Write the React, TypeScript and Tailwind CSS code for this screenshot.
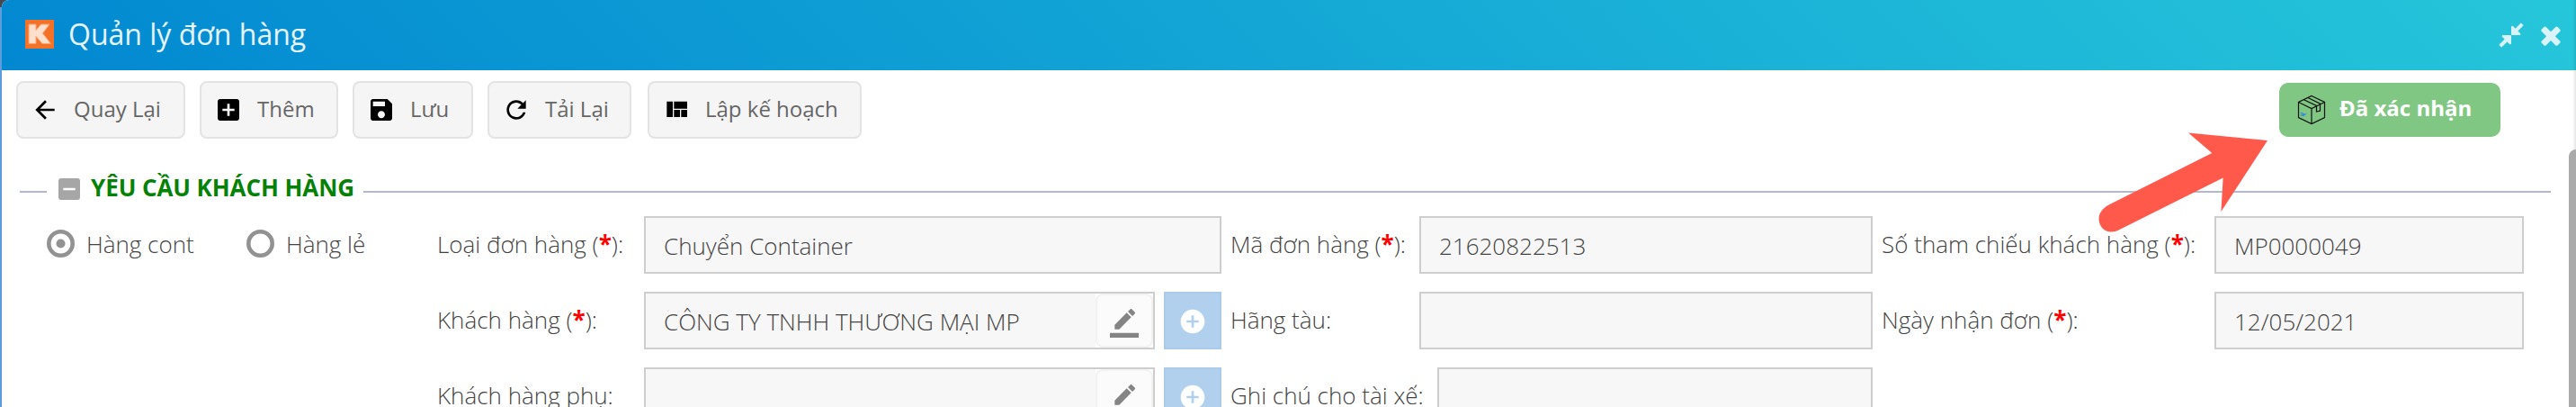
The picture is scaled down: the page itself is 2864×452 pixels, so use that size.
import type { ReactNode } from "react";

const icons = {
  back: "M20 11H7.83l5.59-5.59L12 4l-8 8 8 8 1.41-1.41L7.83 13H20v-2z",
  add: "M19 3H5c-1.11 0-2 .9-2 2v14c0 1.1.89 2 2 2h14c1.1 0 2-.9 2-2V5c0-1.1-.9-2-2-2zm-2 10h-4v4h-2v-4H7v-2h4V7h2v4h4v2z",
  save: "M17 3H5c-1.11 0-2 .9-2 2v14c0 1.1.89 2 2 2h14c1.1 0 2-.9 2-2V7l-4-4zm-5 16c-1.66 0-3-1.34-3-3s1.34-3 3-3 3 1.34 3 3-1.34 3-3 3zm3-10H5V5h10v4z",
  refresh:
    "M17.65 6.35C16.2 4.9 14.21 4 12 4c-4.42 0-7.99 3.58-7.99 8s3.57 8 7.99 8c3.73 0 6.84-2.55 7.73-6h-2.08c-.82 2.33-3.04 4-5.65 4-3.31 0-6-2.69-6-6s2.69-6 6-6c1.66 0 3.14.69 4.22 1.78L13 11h7V4l-2.35 2.35z",
  quilt: "M10 18h5v-6h-5v6zm-6 0h5V5H4v13zm12 0h5v-6h-5v6zM10 5v6h11V5H10z",
  edit: "M17.75 7L14 3.25l-10 10V17h3.75l10-10zm2.96-2.96c.39-.39.39-1.02 0-1.41L18.37.29c-.39-.39-1.02-.39-1.41 0L15 2.25 18.75 6l1.96-1.96zM0 20h24v4H0v-4z",
  plusCircle:
    "M12 2C6.48 2 2 6.48 2 12s4.48 10 10 10 10-4.48 10-10S17.52 2 12 2zm5 11h-4v4h-2v-4H7v-2h4V7h2v4h4v2z",
  minusBox:
    "M19 3H5c-1.1 0-2 .9-2 2v14c0 1.1.9 2 2 2h14c1.1 0 2-.9 2-2V5c0-1.1-.9-2-2-2zm-2 10H7v-2h10v2z",
  compress:
    "M896 960v448q0 26-19 45t-45 19-45-19l-144-144-332 332q-10 10-23 10t-23-10l-114-114q-10-10-10-23t10-23l332-332-144-144q-19-19-19-45t19-45 45-19h448q26 0 45 19t19 45zm755-672q0 13-10 23l-332 332 144 144q19 19 19 45t-19 45-45 19h-448q-26 0-45-19t-19-45v-448q0-26 19-45t45-19 45 19l144 144 332-332q10-10 23-10t23 10l114 114q10 10 10 23z",
  times:
    "M1490 1322q0 40-28 68l-136 136q-28 28-68 28t-68-28l-294-294-294 294q-28 28-68 28t-68-28l-136-136q-28-28-28-68t28-68l294-294-294-294q-28-28-28-68t28-68l136-136q28-28 68-28t68 28l294 294 294-294q28-28 68-28t68 28l136 136q28 28 28 68t-28 68l-294 294 294 294q28 28 28 68z",
};

function Icon({ d, box = 24, className = "" }: { d: string; box?: number; className?: string }) {
  return (
    <svg viewBox={`0 0 ${box} ${box}`} fill="currentColor" className={`size-8 shrink-0 ${className}`}>
      <path d={d} />
    </svg>
  );
}

function ToolButton({ icon, width, children }: { icon: string; width: string; children: ReactNode }) {
  return (
    <button
      className={`flex h-16 shrink-0 items-center gap-4 rounded-lg border-2 border-[#e3e3e3] bg-[#f5f5f5] pl-3.5 text-2xl text-[#666] ${width}`}
    >
      <Icon d={icon} className="text-black" />
      <span className="pb-[3px] whitespace-nowrap">{children}</span>
    </button>
  );
}

function Label({ text, required, className }: { text: string; required?: boolean; className: string }) {
  return (
    <span className={`shrink-0 whitespace-nowrap pb-0.5 text-[26px] font-light text-[#444] ${className}`}>
      {text}
      {required && (
        <>
          {" "}(<b className="font-bold text-[#f00]">*</b>)
        </>
      )}
      :
    </span>
  );
}

function Field({ value = "", className, children }: { value?: string; className: string; children?: ReactNode }) {
  return (
    <div
      className={`flex h-16 shrink-0 items-center justify-between border-2 border-[#cecece] bg-[#f7f7f7] pl-5 text-[26px] font-light text-[#444] ${className}`}
    >
      <span className="whitespace-nowrap pt-0.5">{value}</span>
      {children}
    </div>
  );
}

function PickerField({ value }: { value?: string }) {
  return (
    <>
      <Field value={value} className="w-[568px]">
        <div className="h-[60px] w-16 bg-white">
          <div className="flex h-[60px] w-16 items-center justify-center rounded-lg border-2 border-[#f2f2f2] bg-[#fbfbfb] pt-1.5">
            <Icon d={icons.edit} className="text-[#848484]" />
          </div>
        </div>
      </Field>
      <div className="ml-2.5 flex size-16 shrink-0 items-center justify-center border-2 border-[#accbea] bg-[#b1d0ee] pt-px text-white">
        <Icon d={icons.plusCircle} />
      </div>
    </>
  );
}

function Radio({ label, checked, className }: { label: string; checked?: boolean; className: string }) {
  return (
    <div className={`flex h-16 shrink-0 items-center gap-[13px] ${className}`}>
      <svg viewBox="0 0 31 31" className="mb-[3px] size-[31px] shrink-0">
        <circle cx="15.5" cy="15.5" r="13.2" fill="#fff" stroke="#929292" strokeWidth="4.6" />
        {checked && <circle cx="15.5" cy="15.5" r="5" fill="#929292" />}
      </svg>
      <span className="whitespace-nowrap pb-0.5 text-[26px] font-light text-[#444]">{label}</span>
    </div>
  );
}

function Parcel() {
  return (
    <svg viewBox="0 0 32 34" fill="none" stroke="#111" strokeWidth="1.2" className="h-[34px] w-8 shrink-0">
      <path d="M16 1.5 30.5 8.5V25.5L16 32.5 1.5 25.5V8.5Z" />
      <path d="M1.5 8.5 16 15.5 30.5 8.5M16 15.5V32.5" />
      <path d="M12 3.5 25.5 10.2V18L21.5 19V12.5L7.5 5.7" />
      <path d="M3.5 20.5h2l1.5 1.3h2L6 24M3.5 22.8h3.5" stroke="#2f86e0" />
    </svg>
  );
}

export default function App() {
  return (
    <div className="relative flex h-[452px] w-[2864px] overflow-hidden bg-[#5c9ddb] pl-0.5 font-['Open_Sans','Noto_Sans',sans-serif]">
      <div className="absolute top-0 left-0 size-2 bg-[#454a50]" />
      <div className="relative flex w-[2862px] flex-col rounded-tl-lg bg-white">
        <header className="flex h-[78px] shrink-0 items-center rounded-tl-lg bg-[linear-gradient(45deg,#0288d1,#26c6da)] pr-3 pl-[26px]">
          <svg viewBox="0 0 32 32" className="mb-0.5 size-8 shrink-0">
            <rect width="32" height="32" fill="#f47228" />
            <path
              d="M4 5h8v6.5l5.5-6.5h9.5l-7.5 10 9 11.5h-9.5l-7-8v8h-8z"
              fill="#fce0cd"
              stroke="#f9a272"
              strokeWidth="1"
            />
          </svg>
          <h1 className="mb-0.5 ml-4 text-[32px] leading-[44px] whitespace-nowrap text-white/90">Quản lý đơn hàng</h1>
          <div className="ml-auto flex gap-3 text-[#d9f4f8]">
            <Icon d={icons.compress} box={1792} />
            <Icon d={icons.times} box={1792} />
          </div>
        </header>

        <div className="mt-3 flex h-16 shrink-0 items-center pr-[84px] pl-4">
          <div className="flex gap-4">
            <ToolButton icon={icons.back} width="w-[188px]">Quay Lại</ToolButton>
            <ToolButton icon={icons.add} width="w-[154px]">Thêm</ToolButton>
            <ToolButton icon={icons.save} width="w-[134px]">Lưu</ToolButton>
            <ToolButton icon={icons.refresh} width="w-[160px]">Tải Lại</ToolButton>
          </div>
          <div className="ml-[18px] flex">
            <ToolButton icon={icons.quilt} width="w-[238px]">Lập kế hoạch</ToolButton>
          </div>
          <button className="ml-auto flex h-[60px] w-[246px] items-center gap-[15px] rounded-[10px] bg-[#81c784] pl-5 text-2xl font-bold text-white">
            <Parcel />
            <span className="pb-1 whitespace-nowrap">Đã xác nhận</span>
          </button>
        </div>

        <div className="mt-[35px] flex h-12 shrink-0 items-center pl-5">
          <div className="h-0.5 w-[30px] bg-[#b5b7ca]" />
          <Icon d={icons.minusBox} className="mb-1.5 ml-[9px] text-[#a6a6a6]" />
          <h2 className="mb-2.5 ml-2 w-[303px] text-[26px] font-bold tracking-[-0.07px] whitespace-nowrap text-[#058205]">
            YÊU CẦU KHÁCH HÀNG
          </h2>
          <div className="h-0.5 w-[2432px] bg-[#b5b7ca]" />
        </div>

        <div className="mt-[3px] flex h-[212px] shrink-0 overflow-hidden pl-[50px]">
          <Radio label="Hàng cont" checked className="w-[222px]" />
          <Radio label="Hàng lẻ" className="w-[212px]" />
          <div className="flex flex-col gap-5">
            <div className="flex h-16 shrink-0 items-center">
              <Label text="Loại đơn hàng" required className="w-[230px]" />
              <Field value="Chuyển Container" className="w-[642px]" />
              <Label text="Mã đơn hàng" required className="w-[220px] pl-2.5" />
              <Field value="21620822513" className="w-[504px]" />
              <Label text="Số tham chiếu khách hàng" required className="w-[380px] pl-2.5" />
              <Field value="MP0000049" className="w-[344px]" />
            </div>
            <div className="flex h-16 shrink-0 items-center">
              <Label text="Khách hàng" required className="w-[230px]" />
              <PickerField value="CÔNG TY TNHH THƯƠNG MẠI MP" />
              <Label text="Hãng tàu" className="w-[220px] pl-2.5" />
              <Field className="w-[504px]" />
              <Label text="Ngày nhận đơn" required className="w-[380px] pl-2.5" />
              <Field value="12/05/2021" className="w-[344px]" />
            </div>
            <div className="flex h-16 shrink-0 items-center">
              <Label text="Khách hàng phụ" className="w-[230px]" />
              <PickerField />
              <Label text="Ghi chú cho tài xế" className="w-[240px] pl-2.5" />
              <Field className="w-[484px]" />
            </div>
          </div>
        </div>
      </div>

      <div className="absolute top-0 right-0 h-[452px] w-1 bg-linear-to-r from-transparent to-black/10" />
      <div className="absolute top-[166px] right-0 h-[300px] w-2 rounded-tl-lg bg-[#aaa]" />
      <svg viewBox="0 0 190 112" className="absolute top-[147px] left-[2332px] h-28 w-[190px]">
        <path
          d="M189 9 101 0.5 127.3 23 12.5 80.5C5.5 84.5 1.5 89.5 1.5 96.5 2 104.5 7.5 110.5 15 110.5 18.5 110.5 21 109.5 24 108.2L139.6 50.4 137.4 88Z"
          fill="#ff594b"
        />
      </svg>
    </div>
  );
}
